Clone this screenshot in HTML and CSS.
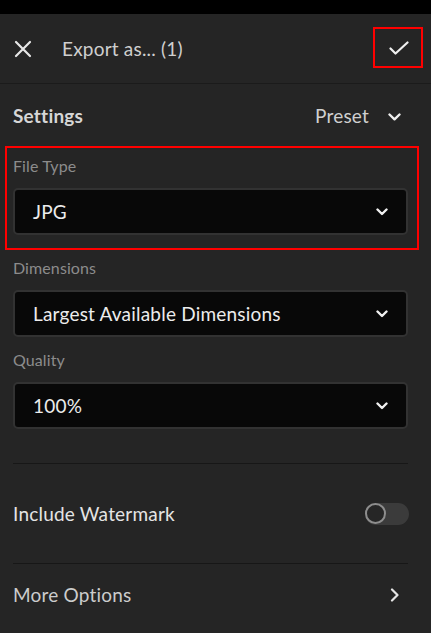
FILE: index.html
```html
<!DOCTYPE html>
<html lang="en">
<head>
<meta charset="utf-8">
<title>Export as</title>
<link rel="stylesheet" href="styles.css">
</head>
<body>
<div class="statusbar"></div>
<header class="header">
  <button class="icon-btn close" aria-label="Close">
    <svg width="18" height="18" viewBox="0 0 18 18"><path d="M2 2L16 16M16 2L2 16" stroke="#e6e6e6" stroke-width="2.2" stroke-linecap="round" fill="none"/></svg>
  </button>
  <div class="title">Export as... (1)</div>
  <button class="icon-btn confirm" aria-label="Done">
    <svg width="20" height="14" viewBox="0 0 20 14"><path d="M1.5 7.5L6.5 12.5L18.5 1.5" stroke="#f0f0f0" stroke-width="2.2" stroke-linecap="round" stroke-linejoin="round" fill="none"/></svg>
  </button>
</header>
<main class="content">
  <div class="settings-row">
    <div class="settings-title">Settings</div>
    <div class="preset">Preset
      <svg class="chev-down" width="13" height="8" viewBox="0 0 13 8"><path d="M1.5 1.5L6.5 6.3L11.5 1.5" stroke="#eeeeee" stroke-width="2.4" stroke-linecap="round" stroke-linejoin="round" fill="none"/></svg>
    </div>
  </div>

  <div class="highlight">
    <div class="field-label">File Type</div>
    <div class="select">
      <span>JPG</span>
      <svg width="12" height="8" viewBox="0 0 12 8"><path d="M1.5 1.5L6 6L10.5 1.5" stroke="#f0f0f0" stroke-width="2.4" stroke-linecap="round" stroke-linejoin="round" fill="none"/></svg>
    </div>
  </div>

  <div class="field-label gap-top">Dimensions</div>
  <div class="select">
    <span>Largest Available Dimensions</span>
    <svg width="12" height="8" viewBox="0 0 12 8"><path d="M1.5 1.5L6 6L10.5 1.5" stroke="#f0f0f0" stroke-width="2.4" stroke-linecap="round" stroke-linejoin="round" fill="none"/></svg>
  </div>

  <div class="field-label gap-top2">Quality</div>
  <div class="select">
    <span>100%</span>
    <svg width="12" height="8" viewBox="0 0 12 8"><path d="M1.5 1.5L6 6L10.5 1.5" stroke="#f0f0f0" stroke-width="2.4" stroke-linecap="round" stroke-linejoin="round" fill="none"/></svg>
  </div>

  <div class="divider first"></div>
  <div class="row watermark">
    <span>Include Watermark</span>
    <div class="toggle"><div class="knob"></div></div>
  </div>
  <div class="divider"></div>
  <div class="row more">
    <span>More Options</span>
    <svg width="10" height="14" viewBox="0 0 10 14"><path d="M2 1.5L7.5 7L2 12.5" stroke="#e6e6e6" stroke-width="2.2" stroke-linecap="round" stroke-linejoin="round" fill="none"/></svg>
  </div>
</main>
</body>
</html>
```

FILE: styles.css
```css
* { box-sizing: border-box; }
html, body {
  margin: 0;
  padding: 0;
  background: #252525;
  font-family: Lato, "Open Sans", sans-serif;
  height: 633px;
  overflow: hidden;
}
.statusbar {
  height: 14px;
  background: #000;
}
.header {
  height: 70px;
  display: flex;
  align-items: center;
  padding: 0 8px 0 14px;
  border-bottom: 1px solid #1b1b1b;
}
.icon-btn {
  background: none;
  border: none;
  padding: 0;
  display: flex;
  align-items: center;
  justify-content: center;
}
.close {
  width: 18px;
  height: 18px;
}
.title {
  flex: 1;
  margin-left: 30px;
  font-size: 19px;
  color: #cfcfcf;
  letter-spacing: 0.2px;
}
.confirm {
  width: 50px;
  height: 41px;
  border: 2px solid #ff0000;
  margin-top: -3px;
}
.confirm svg { margin-left: 1px; margin-top: 2px; }

.content {
  padding: 0 23px 0 13px;
}
.settings-row {
  height: 62px;
  padding-top: 20px;
  display: flex;
  justify-content: space-between;
  align-items: flex-start;
}
.settings-title {
  font-size: 19px;
  font-weight: 700;
  line-height: 24px;
  color: #d6d6d6;
  letter-spacing: 0.2px;
}
.preset {
  display: flex;
  align-items: center;
  font-size: 19px;
  line-height: 24px;
  color: #d0d0d0;
  margin-right: 7px;
  letter-spacing: 0.2px;
}
.chev-down { margin-left: 19px; margin-top: 2px; }

.highlight {
  margin: 0 -11px 0 -8px;
  padding: 6px 9px 13px 6px;
  border: 2px solid #ff0000;
}
.field-label {
  font-size: 16px;
  line-height: 24px;
  color: #8c8c8c;
  margin-bottom: 10px;
  letter-spacing: 0.1px;
}
.gap-top { margin-top: 6px; }
.gap-top2 { margin-top: 11px; }
.select {
  height: 47px;
  background: #080808;
  border: 2px solid #323232;
  border-radius: 5px;
  display: flex;
  align-items: center;
  justify-content: space-between;
  padding: 0 18px 0 18px;
  font-size: 19px;
  color: #ececec;
  letter-spacing: 0.2px;
}
.divider {
  height: 1px;
  background: #171717;
}
.divider.first { margin-top: 34px; }
.row {
  display: flex;
  align-items: center;
  justify-content: space-between;
  font-size: 19px;
  letter-spacing: 0.2px;
}
.watermark {
  height: 99px;
  color: #e4e4e4;
}
.more {
  height: 61px;
  color: #cccccc;
  padding-right: 8px;
}
.toggle {
  width: 44px;
  height: 22px;
  border-radius: 11px;
  background: #3b3b3b;
  display: flex;
  align-items: center;
  margin-right: -1px;
}
.knob {
  width: 21px;
  height: 21px;
  border-radius: 50%;
  border: 2px solid #8d8d8d;
  background: #262626;
}
```
